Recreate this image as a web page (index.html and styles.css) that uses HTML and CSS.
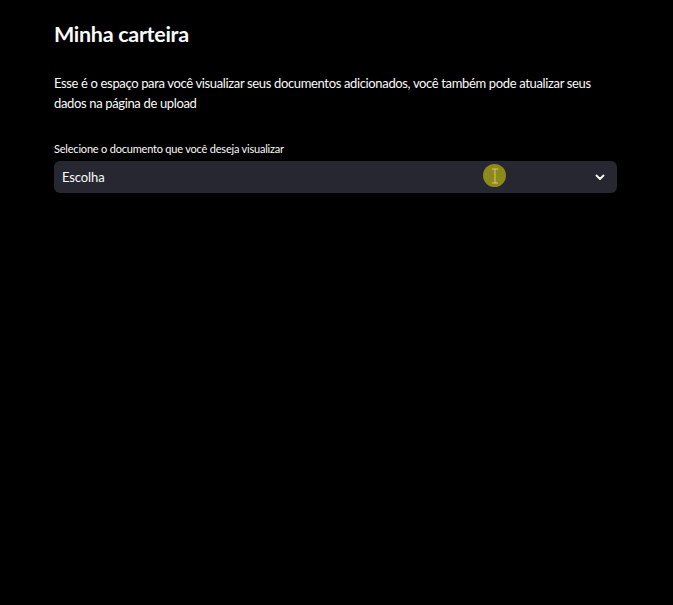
FILE: index.html
```html
<!DOCTYPE html>
<html lang="pt">
<head>
<meta charset="utf-8">
<link rel="stylesheet" href="styles.css">
</head>
<body>
<main class="page">
  <h1 class="title">Minha carteira</h1>
  <p class="intro">Esse é o espaço para você visualizar seus documentos adicionados, você também pode atualizar seus dados na página de upload</p>
  <div class="field">
    <label class="label">Selecione o documento que você deseja visualizar</label>
    <div class="select">
      <span class="value">Escolha</span>
      <svg class="chev" width="10" height="7" viewBox="0 0 10 7"><path d="M1.5 1.5 L5 5 L8.5 1.5" fill="none" stroke="#fafafa" stroke-width="1.8" stroke-linecap="round" stroke-linejoin="round"/></svg>
      <span class="cursor"><svg width="8" height="16" viewBox="0 0 8 16"><path d="M1 1 H7 M4 1 V15 M1 15 H7" fill="none" stroke="#e8c070" stroke-width="1"/></svg></span>
    </div>
  </div>
</main>
</body>
</html>
```
FILE: styles.css
```css
html, body {
  margin: 0;
  background: #000;
  color: #fafafa;
  font-family: "Lato", "Noto Sans", sans-serif;
}
.page {
  width: 563px;
  padding: 20px 0 0 54px;
}
.title {
  margin: 0;
  font-size: 21.5px;
  font-weight: 700;
  letter-spacing: -0.3px;
  line-height: 28px;
}
.intro {
  margin: 25px 0 0;
  font-size: 13px;
  letter-spacing: -0.35px;
  line-height: 20px;
}
.field {
  margin-top: 29px;
}
.label {
  display: block;
  font-size: 11px;
  letter-spacing: -0.2px;
  line-height: 14px;
  margin-bottom: 5px;
}
.select {
  position: relative;
  height: 32px;
  background: #262730;
  border-radius: 6px;
  display: flex;
  align-items: center;
  justify-content: space-between;
  padding: 0 12px 0 8px;
}
.value {
  font-size: 13px;
  letter-spacing: -0.1px;
}
.chev {
  display: block;
}
.cursor {
  position: absolute;
  left: 429px;
  top: 3px;
  width: 23px;
  height: 23px;
  border-radius: 50%;
  background: #8b8a1a;
  display: flex;
  align-items: center;
  justify-content: center;
}
.cursor svg { display: block; }
```
